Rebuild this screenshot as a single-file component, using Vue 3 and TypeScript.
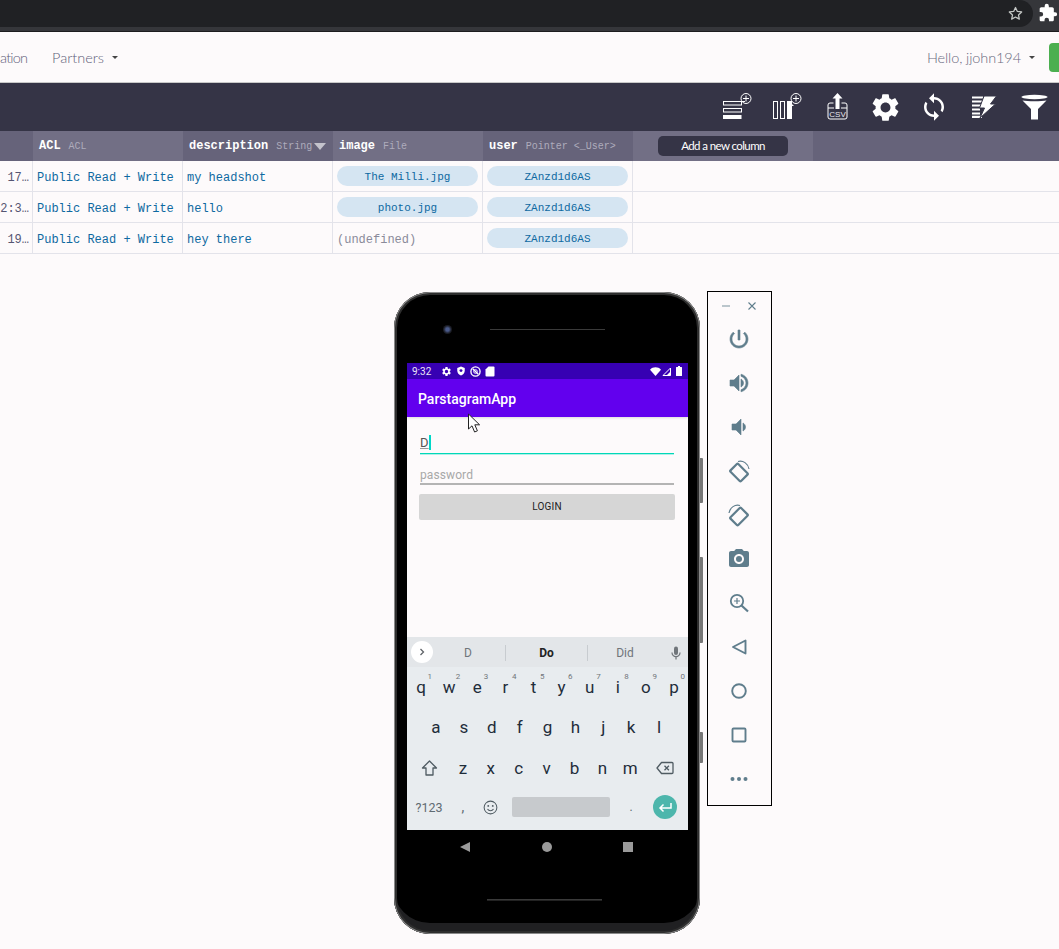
<template>
  <div class="page">
    <div class="browser">
      <div class="urlbar">
        <svg class="star" viewBox="0 0 24 24" width="17" height="17"><path d="M12 3.500l2.600 5.600 6.100.7-4.500 4.200 1.200 6L12 17l-5.400 3 1.200-6-4.500-4.200 6.100-.7z" fill="none" stroke="#c4c7c5" stroke-width="1.800" stroke-linejoin="round" /></svg>
      </div>
      <svg class="puzzle" viewBox="0 0 24 24" width="20" height="20"><path d="M20.500 11H19V7c0-1.100-.9-2-2-2h-4V3.500a2.500 2.500 0 0 0-5 0V5H4c-1.100 0-2 .9-2 2v3.800h1.500a2.700 2.700 0 0 1 0 5.400H2V20c0 1.100.9 2 2 2h3.800v-1.500a2.700 2.700 0 0 1 5.400 0V22H17c1.100 0 2-.9 2-2v-4h1.500a2.500 2.500 0 0 0 0-5z" fill="#fff" /></svg>
    </div>

    <nav class="topnav">
      <span class="clip">ation</span>
      <span class="nav-link">Partners</span><i class="caret"></i>
      <span class="nav-spacer"></span>
      <span class="nav-link hello">Hello, jjohn194</span><i class="caret"></i>
      <span class="green"></span>
    </nav>

    <div class="toolbar">
      <svg class="tool t-row" width="32" height="28" viewBox="0 0 32 28">
        <rect x="2.500" y="9.500" width="18" height="3.500" fill="none" stroke="#fff" /><path d="M20 9.500h4" stroke="#fff" />
        <rect x="2.500" y="16.500" width="18" height="3.500" fill="none" stroke="#fff" />
        <rect x="2" y="23" width="18.500" height="4" fill="#fff" />
        <circle cx="25" cy="6.500" r="5" fill="none" stroke="#fff" /><path d="M25 3.500v6M22 6.500h6" stroke="#fff" />
      </svg>
      <svg class="tool t-col" width="32" height="28" viewBox="0 0 32 28">
        <rect x="2.500" y="9.500" width="4" height="17" fill="none" stroke="#fff" />
        <rect x="9.500" y="9.500" width="4" height="17" fill="none" stroke="#fff" />
        <path d="M16 9h5v3l2 2h-2v13h-5z" fill="#fff" />
        <circle cx="25" cy="6.500" r="5" fill="none" stroke="#fff" /><path d="M25 3.500v6M22 6.500h6" stroke="#fff" />
      </svg>
      <svg class="tool t-csv" width="22" height="28" viewBox="0 0 22 28">
        <path d="M10.500 1l5 5.500h-3V17h-4V6.500h-3z" fill="#fff" />
        <path d="M6.500 11H3a2 2 0 0 0-2 2v12a2 2 0 0 0 2 2h15a2 2 0 0 0 2-2V13a2 2 0 0 0-2-2h-3.500M1 16h6M14 16h6" fill="none" stroke="#fff" />
        <text x="10.500" y="25" class="csv">CSV</text>
      </svg>
      <svg class="tool t-gear" width="33" height="33" viewBox="0 0 24 24"><path :d="gearPath" fill="#fff" /></svg>
      <svg class="tool t-sync" width="30" height="30" viewBox="0 0 24 24"><path :d="syncPath" fill="#fff" /></svg>
      <svg class="tool t-bolt" width="26" height="24" viewBox="0 0 26 24">
        <path d="M1 2.500h11M1 6.500h10M1 10.500h9M1 14.500h8M1 18.500h8M1 21.800h10" stroke="#fff" stroke-width="2.200" />
        <path d="M13 1h12.500l-6 8h5L9 23l4.500-10H8.500z" fill="#fff" stroke="#353446" />
      </svg>
      <svg class="tool t-filter" width="27" height="26" viewBox="0 0 27 26">
        <ellipse cx="13.500" cy="3" rx="13" ry="2.200" fill="#fff" />
        <path d="M1.500 6.500C6 7.500 21 7.500 25.500 6.500L17 15v10.500h-7V15z" fill="#fff" />
      </svg>
    </div>

    <div class="table">
      <div class="row head">
        <div class="cell light"></div>
        <div class="cell"><b>ACL</b><em>ACL</em></div>
        <div class="cell light"><b>description</b><em>String</em><i class="sort"></i></div>
        <div class="cell"><b>image</b><em>File</em></div>
        <div class="cell light"><b>user</b><em>Pointer &lt;_User&gt;</em></div>
        <div class="cell addcol"><button class="addbtn">Add a new column</button></div>
      </div>
      <div v-for="r in rows" :key="r.id" class="row">
        <div class="cell txt date">{{ r.date }}</div>
        <div class="cell txt">Public Read + Write</div>
        <div class="cell txt">{{ r.description }}</div>
        <div class="cell">
          <span v-if="r.image" class="pill">{{ r.image }}</span>
          <span v-else class="undef">(undefined)</span>
        </div>
        <div class="cell"><span class="pill">ZAnzd1d6AS</span></div>
      </div>
    </div>

    <div class="stage">
      <div class="phone">
        <i class="sidekey k1"></i><i class="sidekey k2"></i><i class="sidekey k3"></i>
        <div class="phone-top">
          <span class="lens"></span>
          <span class="speaker"></span>
        </div>

        <div class="screen">
          <div class="statusbar">
            <span class="time">9:32</span>
            <svg width="11" height="11" viewBox="0 0 24 24"><path :d="gearPath" fill="#fff" /></svg>
            <svg width="10" height="10" viewBox="0 0 24 24"><path d="M12 1L3 5v6c0 6 4 10.500 9 12 5-1.500 9-6 9-12V5z" fill="#fff" /><circle cx="12" cy="11" r="3.500" fill="#3700b3" /></svg>
            <svg width="11" height="11" viewBox="0 0 24 24"><circle cx="12" cy="12" r="10" fill="none" stroke="#fff" stroke-width="3" /><path d="M6 6l12 12" stroke="#fff" stroke-width="3" /><circle cx="12" cy="12" r="4" fill="none" stroke="#fff" stroke-width="2" /></svg>
            <svg width="10" height="11" viewBox="0 0 20 22"><path d="M7 1h10a2 2 0 0 1 2 2v16a2 2 0 0 1-2 2H3a2 2 0 0 1-2-2V7z" fill="#fff" /></svg>
            <span class="grow"></span>
            <svg width="11" height="9" viewBox="0 0 22 18"><path d="M0 5.500C6-1 16-1 22 5.500L11 18z" fill="#fff" /></svg>
            <svg class="signal" width="9" height="9" viewBox="0 0 18 18"><path d="M17 2v15H2z" fill="none" stroke="#fff" stroke-width="2" /><path d="M17 9v8H9z" fill="#fff" /></svg>
            <svg class="batt" width="6" height="10" viewBox="0 0 12 20"><path d="M4 0h4v2h3a1 1 0 0 1 1 1v16a1 1 0 0 1-1 1H1a1 1 0 0 1-1-1V3a1 1 0 0 1 1-1h3z" fill="#fff" /></svg>
          </div>
          <div class="appbar">ParstagramApp</div>

          <div class="form">
            <div class="field active"><span class="typed">D</span><i class="text-caret"></i></div>
            <div class="field">password</div>
            <button class="login">LOGIN</button>
          </div>

          <div class="keyboard">
            <div class="suggest">
              <span class="chev"><svg width="8" height="8" viewBox="0 0 8 8"><path d="M2.500 1l3 3-3 3" fill="none" stroke="#5f6368" stroke-width="1.300" /></svg></span>
              <span class="sug s1">D</span>
              <span class="sug strong">Do</span>
              <span class="sug s3">Did</span>
              <svg class="mic" width="12" height="14" viewBox="0 0 24 28"><path d="M12 1a4 4 0 0 0-4 4v9a4 4 0 0 0 8 0V5a4 4 0 0 0-4-4z" fill="#70757a" /><path d="M4 13c0 5 4 8 8 8s8-3 8-8M12 21v6" fill="none" stroke="#70757a" stroke-width="2.500" /></svg>
            </div>
            <div class="keys top">
              <span v-for="(k, i) in topRow" :key="k" class="key">{{ k }}<sup>{{ (i + 1) % 10 }}</sup></span>
            </div>
            <div class="keys mid">
              <span v-for="k in midRow" :key="k" class="key">{{ k }}</span>
            </div>
            <div class="keys low">
              <span class="key wide">
                <svg width="17" height="16" viewBox="0 0 17 16"><path d="M8.500 1L1.500 8H5v7h7V8h3.500z" fill="none" stroke="#4f5b62" stroke-width="1.300" stroke-linejoin="round" /></svg>
              </span>
              <span v-for="k in lowRow" :key="k" class="key">{{ k }}</span>
              <span class="key wide">
                <svg width="18" height="14" viewBox="0 0 18 14"><path d="M5.500 1.500H16a1 1 0 0 1 1 1v9a1 1 0 0 1-1 1H5.500L1 7zM8.500 4.800l4.400 4.400M12.900 4.800L8.500 9.200" fill="none" stroke="#4f5b62" stroke-width="1.300" stroke-linejoin="round" /></svg>
              </span>
            </div>
            <div class="keys bottom">
              <span class="sym">?123</span>
              <span class="comma">,</span>
              <svg class="emoji" width="15" height="15" viewBox="0 0 16 16"><circle cx="8" cy="8" r="6.800" fill="none" stroke="#4f5b62" stroke-width="1.100" /><circle cx="5.600" cy="6.300" r="1" fill="#4f5b62" /><circle cx="10.400" cy="6.300" r="1" fill="#4f5b62" /><path d="M4.800 9.600c1.500 2.400 4.900 2.400 6.400 0" fill="none" stroke="#4f5b62" stroke-width="1.100" /></svg>
              <span class="space"></span>
              <span class="dot">.</span>
              <span class="enter"><svg width="14" height="11" viewBox="0 0 14 11"><path d="M13 1v5H2M5.500 2.500L2 6l3.500 3.500" fill="none" stroke="#fff" stroke-width="1.500" /></svg></span>
            </div>
          </div>

          <svg class="pointer" width="15" height="21" viewBox="0 0 15 21"><path d="M1.500 1v15l3.500-3.200 2.600 6.200 2.800-1.200-2.600-6h4.800z" fill="#fff" stroke="#222" stroke-width="1" stroke-linejoin="round" /></svg>
        </div>

        <div class="softnav">
          <i class="tri"></i><i class="circ"></i><i class="sq"></i>
        </div>
        <div class="phone-bottom"><span class="speaker low-speaker"></span></div>
      </div>

      <aside class="panel">
        <div class="winbtns">
          <svg width="10" height="10" viewBox="0 0 10 10"><path d="M1 5h8" stroke="#8fa3ad" stroke-width="1.200" /></svg>
          <svg width="10" height="10" viewBox="0 0 10 10"><path d="M1.500 1.500l7 7M8.500 1.500l-7 7" stroke="#5f7d8c" stroke-width="1.100" /></svg>
        </div>
        <svg v-for="p in panelPaths" :key="p" class="pico" width="24" height="24" viewBox="0 0 24 24"><path :d="p" fill="#5f7d8c" stroke="#5f7d8c" stroke-width="0.600" /></svg>
        <svg class="pico" width="24" height="24" viewBox="0 0 24 24"><g fill="none" stroke="#5f7d8c" stroke-width="2.200"><rect x="6.500" y="6" width="11" height="15" rx="1" transform="rotate(-45 12 13.500)" /><path d="M11 2.500c5-1.500 10 2 11 7.500" stroke-width="1.200" /></g></svg>
        <svg class="pico" width="24" height="24" viewBox="0 0 24 24"><g fill="none" stroke="#5f7d8c" stroke-width="2.200"><rect x="6.500" y="6" width="11" height="15" rx="1" transform="rotate(45 12 13.500)" /><path d="M13 2.500c-5-1.500-10 2-11 7.500" stroke-width="1.200" /></g></svg>
        <svg class="pico" width="24" height="24" viewBox="0 0 24 24"><path d="M9 2L7.170 4H4c-1.100 0-2 .9-2 2v12c0 1.100.9 2 2 2h16c1.100 0 2-.9 2-2V6c0-1.100-.9-2-2-2h-3.170L15 2H9zm3 15c-2.760 0-5-2.240-5-5s2.240-5 5-5 5 2.240 5 5-2.240 5-5 5z" fill="#5f7d8c" /><circle cx="12" cy="12" r="3" fill="#5f7d8c" /></svg>
        <svg class="pico" width="24" height="24" viewBox="0 0 24 24"><g fill="none" stroke="#5f7d8c"><circle cx="10" cy="10" r="6.200" stroke-width="1.800" /><path d="M14.500 14.500L21 20.500" stroke-width="2.200" /><path d="M10 7v6M7 10h6" stroke-width="1.200" /></g></svg>
        <svg class="pico" width="24" height="24" viewBox="0 0 24 24"><path d="M18.500 5.500v13L6 12z" fill="none" stroke="#5f7d8c" stroke-width="1.900" stroke-linejoin="round" /></svg>
        <svg class="pico" width="24" height="24" viewBox="0 0 24 24"><circle cx="12" cy="12" r="6.800" fill="none" stroke="#5f7d8c" stroke-width="1.900" /></svg>
        <svg class="pico" width="24" height="24" viewBox="0 0 24 24"><rect x="5.500" y="5.500" width="13" height="13" rx="1" fill="none" stroke="#5f7d8c" stroke-width="1.900" /></svg>
        <svg class="pico" width="24" height="24" viewBox="0 0 24 24"><circle cx="5.500" cy="12" r="2" fill="#5f7d8c" /><circle cx="12" cy="12" r="2" fill="#5f7d8c" /><circle cx="18.500" cy="12" r="2" fill="#5f7d8c" /></svg>
      </aside>
    </div>
  </div>
</template>

<script setup lang="ts">
const gearPath =
  'M19.140 12.940c.04-.3.06-.61.06-.94 0-.32-.02-.64-.07-.94l2.030-1.580c.18-.14.23-.41.12-.61l-1.920-3.320c-.12-.22-.37-.29-.59-.22l-2.390.96c-.5-.38-1.030-.7-1.620-.94l-.36-2.540c-.04-.24-.24-.41-.48-.41h-3.840c-.24 0-.43.17-.47.41l-.36 2.540c-.59.24-1.130.57-1.620.94l-2.390-.96c-.22-.08-.47 0-.59.22L2.740 8.870c-.12.21-.08.47.12.61l2.030 1.580c-.05.3-.09.63-.09.94s.02.64.07.94l-2.030 1.580c-.18.14-.23.41-.12.61l1.920 3.320c.12.22.37.29.59.22l2.390-.96c.5.38 1.030.7 1.620.94l.36 2.540c.05.24.24.41.48.41h3.840c.24 0 .44-.17.47-.41l.36-2.540c.59-.24 1.130-.56 1.620-.94l2.390.96c.22.08.47 0 .59-.22l1.920-3.320c.12-.22.07-.47-.12-.61l-2.010-1.580zM12 15.600c-1.980 0-3.600-1.620-3.600-3.600s1.620-3.600 3.600-3.600 3.600 1.620 3.600 3.600-1.620 3.600-3.600 3.600z'
const syncPath =
  'M12 4V1L8 5l4 4V6c3.310 0 6 2.690 6 6 0 1.010-.25 1.970-.7 2.800l1.460 1.460C19.540 15.030 20 13.570 20 12c0-4.420-3.580-8-8-8zm0 14c-3.310 0-6-2.690-6-6 0-1.010.25-1.970.7-2.800L5.240 7.740C4.460 8.970 4 10.430 4 12c0 4.420 3.580 8 8 8v3l4-4-4-4v3z'

const panelPaths: string[] = [
  'M13 3h-2v10h2V3zm4.830 2.170l-1.420 1.420C17.990 7.860 19 9.810 19 12c0 3.870-3.130 7-7 7s-7-3.130-7-7c0-2.190 1.010-4.140 2.580-5.420L6.170 5.170C4.230 6.820 3 9.260 3 12c0 4.970 4.030 9 9 9s9-4.030 9-9c0-2.740-1.230-5.180-3.170-6.830z',
  'M3 9v6h4l5 5V4L7 9H3zm13.500 3c0-1.770-1.020-3.290-2.500-4.030v8.050c1.480-.73 2.500-2.250 2.500-4.020zM14 3.230v2.060c2.890.86 5 3.540 5 6.710s-2.110 5.850-5 6.710v2.060c4.010-.91 7-4.490 7-8.770s-2.990-7.860-7-8.770z',
  'M18.500 12c0-1.770-1.020-3.290-2.500-4.030v8.050c1.480-.73 2.500-2.250 2.500-4.020zM5 9v6h4l5 5V4L9 9H5z',
]

const rows = [
  { id: 1, date: '17…', description: 'my headshot', image: 'The Milli.jpg' },
  { id: 2, date: '2:3…', description: 'hello', image: 'photo.jpg' },
  { id: 3, date: '19…', description: 'hey there', image: '' },
]

const topRow = ['q', 'w', 'e', 'r', 't', 'y', 'u', 'i', 'o', 'p']
const midRow = ['a', 's', 'd', 'f', 'g', 'h', 'j', 'k', 'l']
const lowRow = ['z', 'x', 'c', 'v', 'b', 'n', 'm']
</script>

<style>
html,
body {
  margin: 0;
  background: #fdfafb;
}
</style>

<style scoped>
.page {
  width: 1059px;
  height: 949px;
  overflow: hidden;
  background: #fdfafb;
  font-family: 'Liberation Mono', monospace;
}

/* browser chrome */
.browser {
  height: 31px;
  background: #35363a;
  border-bottom: 1px solid #1c1c1e;
  display: flex;
  align-items: flex-start;
}
.urlbar {
  width: 1033px;
  height: 27px;
  background: #202124;
  border-radius: 0 14px 14px 0;
  display: flex;
  align-items: center;
  justify-content: flex-end;
  padding-right: 9px;
  box-sizing: border-box;
}
.puzzle {
  margin: 3px 0 0 5px;
  flex: none;
}

/* nav */
.topnav {
  height: 50px;
  border-bottom: 1px solid #c8c8c8;
  display: flex;
  align-items: center;
  font-family: Lato, sans-serif;
  font-weight: 300;
  font-size: 14.500px;
  color: #5f5f7a;
}
.clip {
  width: 28px;
  margin-right: 24px;
  letter-spacing: -0.8px;
  white-space: nowrap;
  flex: none;
}
.nav-link {
  white-space: nowrap;
}
.hello {
  color: #6b6b80;
  letter-spacing: -0.1px;
}
.nav-spacer {
  flex: 1;
}
.caret {
  width: 0;
  height: 0;
  margin-left: 8px;
  border-left: 3.500px solid transparent;
  border-right: 3.500px solid transparent;
  border-top: 3.500px solid #444;
  margin-top: 1px;
}
.green {
  width: 10px;
  height: 29px;
  margin-left: 14px;
  background: #4caf50;
  border-radius: 4px 0 0 4px;
}

/* toolbar */
.toolbar {
  height: 48px;
  background: #353446;
  display: flex;
  align-items: center;
  justify-content: flex-end;
  padding-right: 11px;
}
.tool {
  flex: none;
}
.t-row,
.t-col,
.t-csv {
  margin-top: -2px;
}
.t-col {
  margin-left: 18px;
}
.t-csv {
  margin-left: 24px;
}
.t-gear {
  margin-left: 19.500px;
}
.t-sync {
  margin-left: 17.500px;
}
.t-bolt {
  margin-left: 22px;
}
.t-filter {
  margin-left: 24px;
}
.csv {
  font-family: 'Liberation Sans', sans-serif;
  font-size: 8px;
  fill: #e8e8ee;
  text-anchor: middle;
}

/* table */
.row {
  display: grid;
  grid-template-columns: 33px repeat(4, 150px) 180px 1fr;
  height: 31px;
  border-bottom: 1px solid #e3e3ea;
  box-sizing: border-box;
  font-size: 12px;
  color: #0e69a1;
}
.cell {
  border-right: 1px solid #e3e3ea;
  padding: 0 4px;
  display: flex;
  align-items: center;
  white-space: nowrap;
  overflow: hidden;
  min-width: 0;
  box-sizing: border-box;
}
.txt {
  padding-top: 4px;
}
.date {
  justify-content: flex-end;
  padding: 4px 3px 0 0;
  color: #555572;
}
.pill {
  flex: 1;
  height: 20px;
  line-height: 22px;
  text-align: center;
  background: #d5e5f2;
  border-radius: 10px;
  font-size: 11px;
}
.undef {
  color: #8a8a9a;
  padding-top: 4px;
}
.head {
  height: 30px;
  border-bottom: 0;
  background: #66637a;
  color: #fff;
}
.head .cell {
  border: 0;
  padding: 0 6px;
  background: #726f85;
}
.head .cell.light {
  background: #66637a;
}
.head b {
  font-weight: 700;
  color: #fff;
  font-size: 12px;
}
.head em {
  font-style: normal;
  font-size: 10px;
  color: #aeacbc;
  margin-left: 8px;
}
.sort {
  margin-left: 2px;
  border-left: 6px solid transparent;
  border-right: 6px solid transparent;
  border-top: 7px solid #c4c3cc;
}
.head .addcol {
  justify-content: center;
  padding: 0;
}
.addbtn {
  width: 130px;
  height: 20px;
  padding: 0 0 2px;
  border: 0;
  border-radius: 5px;
  background: #353446;
  color: #fff;
  font-family: Lato, sans-serif;
  font-size: 11.500px;
  letter-spacing: -0.6px;
}

/* phone + emulator panel */
.stage {
  display: flex;
  align-items: flex-start;
  gap: 7px;
  padding: 37px 0 0 394px;
}
.phone {
  position: relative;
  width: 306px;
  height: 642px;
  margin-top: 1px;
  box-sizing: border-box;
  background: #000;
  border-radius: 36px;
  box-shadow: inset 0 0 0 1px #8a8a8a, inset 0 0 0 3px #2e2e2e, inset 0 -12px 0 -1px #202022;
  flex: none;
  display: flex;
  flex-direction: column;
  padding: 0 12px 0 13px;
}
.sidekey {
  position: absolute;
  right: -3px;
  width: 3px;
  background: #777;
  border-radius: 0 1px 1px 0;
}
.k1 {
  top: 166px;
  height: 45px;
}
.k2 {
  top: 265px;
  height: 86px;
}
.k3 {
  top: 440px;
  height: 31px;
}
.phone-top {
  height: 71px;
  display: flex;
  align-items: center;
  padding: 4px 0 0 36px;
  box-sizing: border-box;
}
.lens {
  width: 9px;
  height: 9px;
  border-radius: 50%;
  background: radial-gradient(circle, #4a5a8a 25%, #1a1c24 60%);
  margin-right: 38px;
}
.speaker {
  width: 115px;
  height: 1px;
  background: #3a3a3a;
}
.screen {
  position: relative;
  height: 467px;
  background: #fdfafb;
  display: flex;
  flex-direction: column;
  font-family: Roboto, sans-serif;
}
.statusbar {
  height: 16px;
  background: #3700b3;
  color: #fff;
  display: flex;
  align-items: center;
  gap: 4px;
  padding: 0 6px 0 5px;
  font-size: 10px;
}
.time {
  margin-right: 6px;
  opacity: 0.9;
}
.grow {
  flex: 1;
}
.signal {
  margin-left: -3px;
}
.batt {
  margin-left: 1px;
}
.appbar {
  height: 38px;
  background: #6200ee;
  color: #fff;
  font-weight: 500;
  font-size: 14px;
  line-height: 40px;
  padding-left: 11px;
  box-shadow: 0 1px 2px rgba(0, 0, 0, 0.12);
}
.form {
  flex: 1;
  padding: 0 14px 0 13px;
  display: flex;
  flex-direction: column;
}
.field {
  height: 24px;
  padding-top: 6px;
  box-sizing: border-box;
  border-bottom: 2px solid #b4b4b4;
  font-size: 12px;
  color: #a8a8a8;
  line-height: 16px;
  letter-spacing: 0.1px;
}
.field.active {
  margin-top: 13px;
  border-bottom: 1px solid #00d8b8;
  box-shadow: 0 1px 0 rgba(0, 216, 184, 0.3);
  display: flex;
  color: #555;
  padding-top: 5px;
}
.field + .field {
  margin-top: 7px;
}
.typed {
  font-size: 13px;
  text-decoration: underline;
  text-decoration-color: #999;
}
.text-caret {
  width: 2px;
  height: 15px;
  background: #00d8c8;
}
.login {
  margin: 9px -1px 0;
  height: 26px;
  border: 0;
  border-radius: 2px;
  background: #d6d6d6;
  font-family: Roboto, sans-serif;
  font-size: 10px;
  font-weight: 400;
  color: #222;
  padding: 0 0 2px;
  letter-spacing: 0.2px;
}
.keyboard {
  height: 193px;
  background: #e8ecef;
  color: #1f2d3a;
  display: flex;
  flex-direction: column;
}
.suggest {
  height: 30px;
  box-sizing: border-box;
  padding-top: 1px;
  background: #e3e6e9;
  position: relative;
  display: grid;
  grid-template-columns: 99px 82px 82px 18px;
  align-items: center;
  font-size: 12px;
  color: #70757a;
  text-align: center;
}
.chev {
  position: absolute;
  left: 4px;
  top: 4px;
  width: 22px;
  height: 22px;
  border-radius: 50%;
  background: #fff;
  display: flex;
  align-items: center;
  justify-content: center;
}
.sug {
  height: 16px;
  line-height: 16px;
  border-right: 1px solid #c8ccd0;
}
.s1 {
  padding-left: 24px;
}
.sug.strong {
  font-weight: 700;
  color: #222;
}
.sug.s3 {
  border-right: 0;
  padding-right: 8px;
}
.mic {
  justify-self: start;
}
.keys {
  display: grid;
  grid-template-columns: repeat(10, 1fr);
  font-size: 17px;
  text-align: center;
}
.key {
  position: relative;
  display: flex;
  align-items: center;
  justify-content: center;
}
.top {
  height: 39px;
}
.mid {
  height: 41px;
  grid-template-columns: repeat(9, 27.900px);
  padding-left: 15px;
}
.low {
  height: 40px;
  box-sizing: border-box;
  display: flex;
  padding: 2px 0 0 8px;
}
.low .key {
  width: 27.900px;
}
.low .key.wide {
  width: 28px;
  flex: none;
}
.low .key.wide:first-child {
  margin-right: 6px;
}
.low .key.wide:last-child {
  margin-left: 7px;
}
sup {
  position: absolute;
  top: 6px;
  right: 3px;
  font-size: 8px;
  line-height: 8px;
  color: #70757a;
}
.bottom {
  flex: 1;
  display: flex;
  align-items: center;
  font-size: 12px;
  color: #5f6b72;
  padding: 0 0 3px 8px;
}
.sym {
  width: 28px;
  text-align: center;
  font-size: 12.500px;
}
.comma {
  width: 16px;
  margin-left: 12px;
  text-align: center;
  font-size: 14px;
}
.emoji {
  margin-left: 12px;
}
.space {
  width: 98px;
  height: 20px;
  margin-left: 14px;
  background: #c7cacd;
  border-radius: 2px;
}
.dot {
  width: 42px;
  text-align: center;
}
.enter {
  width: 24px;
  height: 24px;
  margin-left: 1px;
  border-radius: 50%;
  background: #4db6ac;
  display: flex;
  align-items: center;
  justify-content: center;
}
.pointer {
  position: absolute;
  left: 60px;
  top: 50px;
}
.softnav {
  height: 33px;
  display: grid;
  grid-template-columns: 63px 82px 81px;
  align-items: center;
  justify-items: end;
}
.tri {
  border-top: 5.500px solid transparent;
  border-bottom: 5.500px solid transparent;
  border-right: 10px solid #9a9a9a;
}
.circ {
  width: 10px;
  height: 10px;
  border-radius: 50%;
  background: #9a9a9a;
}
.sq {
  width: 10px;
  height: 10px;
  background: #9a9a9a;
}
.phone-bottom {
  padding: 36px 0 0 80px;
}
.low-speaker {
  display: block;
  box-shadow: 0 1px 0 #222;
}

.panel {
  width: 65px;
  height: 515px;
  box-sizing: border-box;
  border: 1px solid #000;
  display: flex;
  flex-direction: column;
  align-items: center;
  gap: 20px;
  padding: 9px 1px 0 0;
  flex: none;
}
.winbtns {
  width: 100%;
  display: flex;
  justify-content: space-between;
  padding: 0 13px;
  box-sizing: border-box;
  margin-bottom: -4px;
  height: 10px;
}
.pico {
  flex: none;
}
</style>
